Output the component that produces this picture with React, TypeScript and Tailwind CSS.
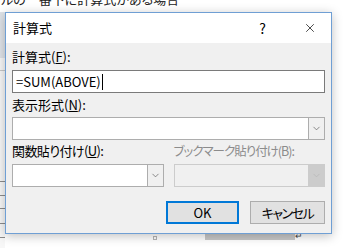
import { ChevronDown, X } from 'lucide-react';

const font = { fontFamily: '"Noto Sans CJK JP", "Noto Sans", sans-serif' };

function Combo({ disabled = false }: { disabled?: boolean }) {
    return (
        <div
            className={`flex h-[23px] border ${disabled ? 'border-[#cccccc] bg-[#f0f0f0]' : 'border-[#adadad] bg-white'}`}
        >
            <div className="flex-1" />
            <div
                className={`flex w-[16px] items-center justify-center border-l ${disabled ? 'border-[#cccccc] bg-[#cccccc] text-[#b5b5b5]' : 'border-[#adadad] bg-[#f0f0f0] text-[#5a5a5a]'}`}
            >
                <ChevronDown className="h-[11px] w-[11px]" strokeWidth={1.5} />
            </div>
        </div>
    );
}

export default function App() {
    return (
        <div
            className="relative h-[248px] w-[345px] overflow-hidden bg-white text-[#000] [font-feature-settings:'palt']"
            style={font}
        >
            {/* document behind the dialog */}
            <div className="h-[12px] overflow-hidden whitespace-nowrap pl-[1px] text-[13px] leading-none text-[#222]">
                <div className="-mt-[8px]">ルの一番下に計算式がある場合</div>
            </div>
            <div className="flex h-[236px]">
                <div className="flex w-[5px] flex-col bg-[#f7f7f7]">
                    <div className="h-[46px] bg-[#dfe3e8]" />
                    <div className="mt-[12px] h-[1px] bg-[#c8c8c8]" />
                    <div className="mt-[110px] h-[1px] bg-[#8c8c8c]" />
                    <div className="mt-[13px] h-[1px] bg-[#8c8c8c]" />
                    <div className="mt-[12px] h-[1px] bg-[#8c8c8c]" />
                    <div className="mt-[14px] h-[1px] bg-[#8c8c8c]" />
                    <div className="mt-[13px] h-[1px] bg-[#8c8c8c]" />
                </div>
                <div className="flex-1" />
            </div>
            <div className="absolute left-[153px] top-[236px] h-[4px] w-[4px] border border-[#b5b5b5]" />
            <div className="absolute left-[205px] top-[234px] h-[6px] w-[90px] bg-[#c8c8c8]" />
            <div className="absolute left-[295px] top-[231px] text-[9px] leading-none text-[#444]">↵</div>

            {/* dialog window */}
            <div className="absolute left-[5px] top-[12px] flex h-[222px] w-[327px] flex-col border border-[#6f9fd4] bg-[#f0f0f0] shadow-[0_2px_10px_rgba(0,0,0,0.25)]">
                <div className="flex h-[30px] items-center bg-white pl-[7px] text-[13px]">
                    <span>計算式</span>
                    <span className="ml-auto mr-[37px] text-[14px]">?</span>
                    <X className="mr-[14px] h-[14px] w-[14px]" strokeWidth={1.2} />
                </div>
                <div className="flex flex-col px-[6px] text-[13px] leading-[16px]">
                    <div className="mt-[6px]">
                        計算式(<span className="underline">F</span>):
                    </div>
                    <div className="mt-[5px] flex h-[23px] items-center border border-[#7a7a7a] bg-white pl-[3px]">
                        <span>=SUM(ABOVE)</span>
                        <span className="ml-[1px] h-[16px] w-[1px] bg-black" />
                    </div>
                    <div className="mt-[4px]">
                        表示形式(<span className="underline">N</span>):
                    </div>
                    <div className="mt-[4px]">
                        <Combo />
                    </div>
                    <div className="mt-[3px] grid grid-cols-2 gap-[10px]">
                        <div className="tracking-[-0.6px]">
                            関数貼り付け(<span className="underline">U</span>):
                        </div>
                        <div className="whitespace-nowrap text-[12.5px] tracking-[-1px] text-[#8c8c8c]">ブックマーク貼り付け(B):</div>
                    </div>
                    <div className="mt-[5px] grid grid-cols-2 gap-[10px]">
                        <Combo />
                        <Combo disabled />
                    </div>
                    <div className="mt-[14px] flex justify-end gap-[11px]">
                        <button className="flex h-[23px] w-[73px] items-center justify-center border-2 border-[#0078d7] bg-[#e1e1e1]">
                            OK
                        </button>
                        <button className="flex h-[23px] w-[75px] items-center justify-center border border-[#adadad] bg-[#e1e1e1] tracking-[-1.5px]">
                            キャンセル
                        </button>
                    </div>
                </div>
            </div>
        </div>
    );
}
